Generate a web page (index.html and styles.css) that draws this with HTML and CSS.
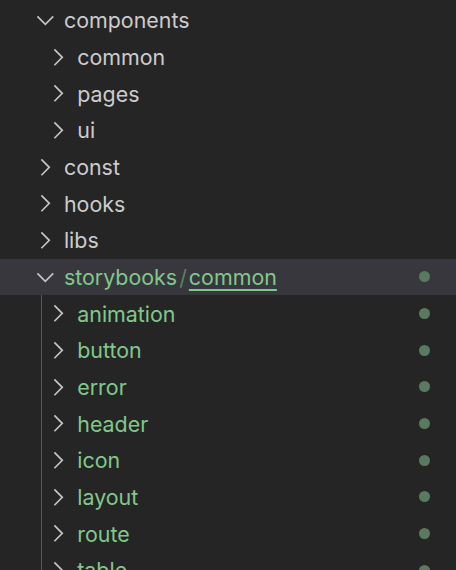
FILE: index.html
```html
<!DOCTYPE html>
<html>
<head>
<meta charset="utf-8">
<link rel="stylesheet" href="styles.css">
</head>
<body>
<div class="tree">
  <div class="row d0"><span class="tw"><svg viewBox="0 0 27 27"><path class="down" d="M5.5 9.5 L13.5 17.5 L21.5 9.5"/></svg></span><span class="label">components</span></div>
  <div class="row d1"><span class="tw"><svg viewBox="0 0 27 27"><path d="M9.5 5.5 L17.5 13.5 L9.5 21.5"/></svg></span><span class="label">common</span></div>
  <div class="row d1"><span class="tw"><svg viewBox="0 0 27 27"><path d="M9.5 5.5 L17.5 13.5 L9.5 21.5"/></svg></span><span class="label">pages</span></div>
  <div class="row d1"><span class="tw"><svg viewBox="0 0 27 27"><path d="M9.5 5.5 L17.5 13.5 L9.5 21.5"/></svg></span><span class="label">ui</span></div>
  <div class="row d0"><span class="tw"><svg viewBox="0 0 27 27"><path d="M9.5 5.5 L17.5 13.5 L9.5 21.5"/></svg></span><span class="label">const</span></div>
  <div class="row d0"><span class="tw"><svg viewBox="0 0 27 27"><path d="M9.5 5.5 L17.5 13.5 L9.5 21.5"/></svg></span><span class="label">hooks</span></div>
  <div class="row d0"><span class="tw"><svg viewBox="0 0 27 27"><path d="M9.5 5.5 L17.5 13.5 L9.5 21.5"/></svg></span><span class="label">libs</span></div>
  <div class="row d0 selected green"><span class="tw"><svg viewBox="0 0 27 27"><path d="M5.5 9.5 L13.5 17.5 L21.5 9.5"/></svg></span><span class="label">storybooks<span class="sep">/</span><span class="active">common</span></span><span class="dot"></span></div>
  <div class="group">
    <div class="row g1 green"><span class="tw"><svg viewBox="0 0 27 27"><path d="M9.5 5.5 L17.5 13.5 L9.5 21.5"/></svg></span><span class="label">animation</span><span class="dot"></span></div>
    <div class="row g1 green"><span class="tw"><svg viewBox="0 0 27 27"><path d="M9.5 5.5 L17.5 13.5 L9.5 21.5"/></svg></span><span class="label">button</span><span class="dot"></span></div>
    <div class="row g1 green"><span class="tw"><svg viewBox="0 0 27 27"><path d="M9.5 5.5 L17.5 13.5 L9.5 21.5"/></svg></span><span class="label">error</span><span class="dot"></span></div>
    <div class="row g1 green"><span class="tw"><svg viewBox="0 0 27 27"><path d="M9.5 5.5 L17.5 13.5 L9.5 21.5"/></svg></span><span class="label">header</span><span class="dot"></span></div>
    <div class="row g1 green"><span class="tw"><svg viewBox="0 0 27 27"><path d="M9.5 5.5 L17.5 13.5 L9.5 21.5"/></svg></span><span class="label">icon</span><span class="dot"></span></div>
    <div class="row g1 green"><span class="tw"><svg viewBox="0 0 27 27"><path d="M9.5 5.5 L17.5 13.5 L9.5 21.5"/></svg></span><span class="label">layout</span><span class="dot"></span></div>
    <div class="row g1 green"><span class="tw"><svg viewBox="0 0 27 27"><path d="M9.5 5.5 L17.5 13.5 L9.5 21.5"/></svg></span><span class="label">route</span><span class="dot"></span></div>
    <div class="row g1 green"><span class="tw"><svg viewBox="0 0 27 27"><path d="M9.5 5.5 L17.5 13.5 L9.5 21.5"/></svg></span><span class="label">table</span><span class="dot"></span></div>
  </div>
</div>
</body>
</html>
```

FILE: styles.css
```css
html, body {
  margin: 0;
  padding: 0;
  background: #252526;
  height: 100%;
  overflow: hidden;
}
.tree {
  padding-top: 2px;
  font-family: Inter, "Noto Sans", sans-serif;
  font-size: 21.4px;
  color: #cccccc;
}
.row {
  display: flex;
  align-items: center;
  height: 36.67px;
  box-sizing: border-box;
  padding-right: 26px;
}
.d0 { padding-left: 31.7px; }
.d1 { padding-left: 45px; }
.group {
  margin-left: 41px;
  border-left: 1px solid #585858;
}
.g1 { padding-left: 3px; }
.tw {
  width: 26.67px;
  height: 26.67px;
  flex: none;
  margin-right: 5.6px;
  display: flex;
}
.tw svg {
  width: 100%;
  height: 100%;
}
.tw path {
  fill: none;
  stroke: #c5c5c5;
  stroke-width: 1.7;
}
.label {
  flex: 1;
  white-space: nowrap;
}
.green .label { color: #81c88b; }
.selected { background: #37373d; }
.sep {
  color: #81c88b;
  opacity: 0.5;
  padding: 0 2px 0 2px;
}
.active {
  text-decoration: underline;
  text-underline-offset: 4px;
  text-decoration-thickness: 2px;
}
.dot {
  width: 11px;
  height: 11px;
  border-radius: 50%;
  background: #587a5e;
  flex: none;
}
```
